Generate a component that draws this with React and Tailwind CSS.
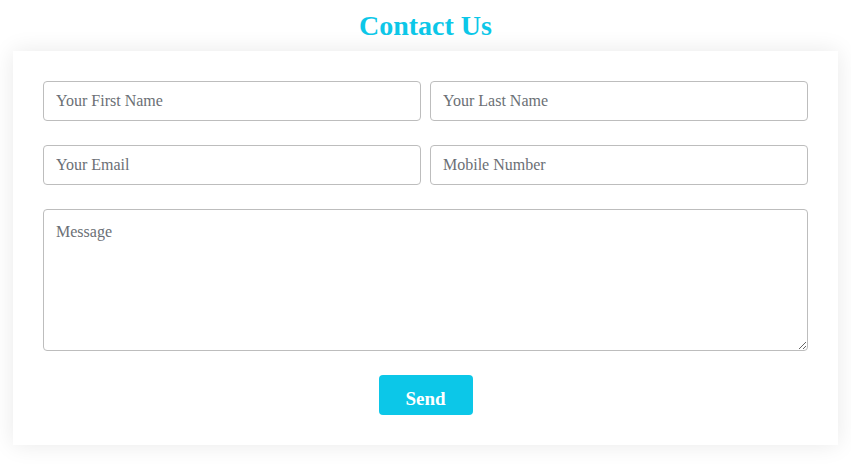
import React from 'react';

const fieldCls =
  'h-10 w-full rounded-[4px] border border-[#bdbdbd] bg-white px-3 text-base text-gray-700 placeholder:text-[#6b6f75] outline-none';

export default function App() {
  return (
    <div className="min-h-[464px] w-[851px] bg-white font-['Liberation_Serif','Times_New_Roman',serif]">
      <h1 className="flex h-[51px] items-center justify-center pt-[1px] text-[28px] font-bold text-[#0cc7e8]">
        Contact Us
      </h1>
      <div className="mx-[13px] bg-white p-[30px] shadow-[0_0_22px_rgba(0,0,0,0.09)]">
        <div className="grid grid-cols-2 gap-x-[9px] gap-y-[24px]">
          <input className={fieldCls} placeholder="Your First Name" />
          <input className={fieldCls} placeholder="Your Last Name" />
          <input className={fieldCls} placeholder="Your Email" />
          <input className={fieldCls} placeholder="Mobile Number" />
          <textarea
            className="col-span-2 block h-[142px] w-full rounded-[4px] border border-[#bdbdbd] px-3 py-[10px] text-base text-gray-700 placeholder:text-[#6b6f75] outline-none"
            placeholder="Message"
          />
        </div>
        <div className="mt-[24px] flex justify-center">
          <button className="h-10 w-[94px] rounded-[4px] bg-[#0cc7e8] pt-[9px] text-[19px] font-bold text-white">
            Send
          </button>
        </div>
      </div>
    </div>
  );
}
